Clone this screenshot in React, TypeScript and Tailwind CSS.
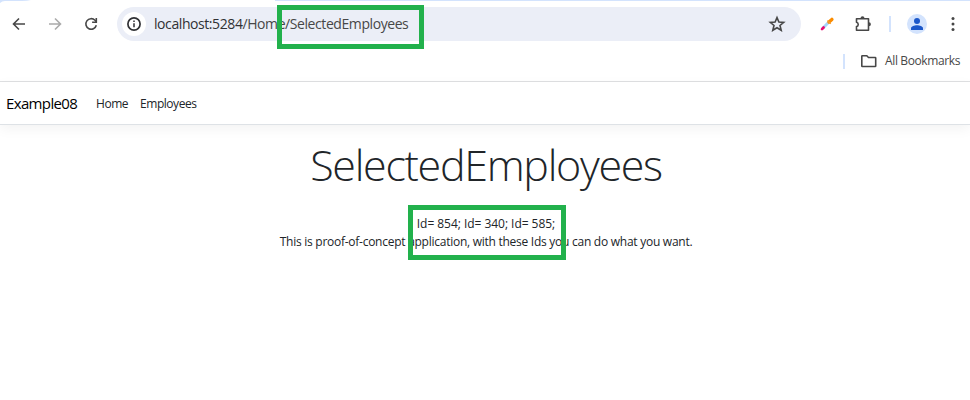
import type { ReactNode } from "react";

function Icon({ children, className }: { children: ReactNode; className: string }) {
  return (
    <svg viewBox="0 0 20 20" fill="none" className={`h-5 w-5 shrink-0 ${className}`}>
      {children}
    </svg>
  );
}

function AddressBar() {
  return (
    <div className="relative ml-[16px] flex h-[34px] w-[684px] items-center rounded-full bg-[#ebeef7] pl-[5px] pr-[14px]">
      <span className="flex h-6 w-6 items-center justify-center rounded-full bg-white">
        <Icon className="text-[#303134]">
          <circle cx="10" cy="10" r="6.1" stroke="currentColor" strokeWidth="1.7" />
          <path d="M10 9.3v4M10 6.6v1.5" stroke="currentColor" strokeWidth="1.5" />
        </Icon>
      </span>
      <span className="ml-[8px] whitespace-nowrap text-[14px] leading-5 tracking-[-0.42px] text-[#474747]">
        <span className="text-[#303134]">localhost:5284</span>/Home/SelectedEmployees
      </span>
      <Icon className="ml-auto text-[#474747]">
        <path
          d="M10 3.6l1.9 4.4 4.8.4-3.7 3.1 1.2 4.7-4.2-2.5-4.2 2.5 1.2-4.7-3.7-3.1 4.8-.4z"
          stroke="currentColor"
          strokeWidth="1.6"
        />
      </Icon>
      <div className="absolute left-[160px] top-[-2px] h-[44px] w-[147px] border-[5px] border-[#22b14c]" />
    </div>
  );
}

function Toolbar() {
  return (
    <div className="flex h-[34px] items-center pl-[9px]">
      <Icon className="text-[#474747]">
        <path d="M16 10H5M10 4.5L4.5 10l5.5 5.5" stroke="currentColor" strokeWidth="1.6" />
      </Icon>
      <Icon className="ml-[16px] text-[#ababab]">
        <path d="M4 10h11M10 4.5L15.5 10 10 15.5" stroke="currentColor" strokeWidth="1.6" />
      </Icon>
      <Icon className="ml-[16px] text-[#474747]">
        <path d="M15.3 11.3A5.3 5.3 0 1 1 14 6.3l1.4 1.5" stroke="currentColor" strokeWidth="1.6" />
        <path d="M15.3 4v4.2h-4.2" stroke="currentColor" strokeWidth="1.6" />
      </Icon>
      <AddressBar />
      <Icon className="ml-[16px]">
        <path d="M5.5 14.5l6.2-6.2" stroke="#a5d4fa" strokeWidth="3" />
        <path d="M5 15.100l1.600-1.600" stroke="#e9096f" strokeWidth="2.600" strokeLinecap="round" />
        <path d="M12 8l2.900-2.600" stroke="#fb8c00" strokeWidth="3.400" strokeLinecap="round" />
        <path d="M10.500 6.500l3.200 3.200" stroke="#f59a2c" strokeWidth="1.400" />
      </Icon>
      <Icon className="ml-[16px] text-[#474747]">
        <path
          d="M3.500 4.700h12v11.500h-12v-3.600c2.300-.5 2.300-3.800 0-4.300z"
          stroke="currentColor"
          strokeWidth="1.6"
          strokeLinejoin="round"
        />
        <path d="M7.500 4.300a2 2 0 0 1 4 0zM15.900 8.200a2 2 0 0 1 0 4z" fill="currentColor" />
      </Icon>
      <span className="ml-[16px] h-4 w-[2px] bg-[#d3e3fd]" />
      <span className="ml-[16px] flex h-5 w-5 items-center justify-center rounded-full bg-[#d3e3fd]">
        <Icon className="text-[#1b57c9]">
          <circle cx="10" cy="7" r="3" fill="currentColor" />
          <path d="M4 16v-1.7C4 12.2 7.5 11.2 10 11.2s6 1 6 3.1V16z" fill="currentColor" />
        </Icon>
      </span>
      <Icon className="ml-[16px] text-[#474747]">
        <circle cx="10" cy="4.5" r="1.5" fill="currentColor" />
        <circle cx="10" cy="10" r="1.5" fill="currentColor" />
        <circle cx="10" cy="15.5" r="1.5" fill="currentColor" />
      </Icon>
    </div>
  );
}

function BrowserChrome() {
  return (
    <header className="h-[82px] border-b border-[#dfe0e2]">
      <div className="flex h-[7px] items-start">
        <svg viewBox="0 0 31 3" className="h-[3px] w-[31px]">
          <path d="M0 0h31Q27 1 22 1H5Q2 1 0 3z" fill="#d3e3fd" />
        </svg>
        <span className="ml-[244px] h-px flex-1 bg-[#d3e3fd]" />
      </div>
      <Toolbar />
      <div className="flex h-[40px] items-center pl-[843px]">
        <span className="h-[15px] w-[2px] bg-[#d3e3fd]" />
        <Icon className="ml-[14px] text-[#474747]">
          <path
            d="M3.3 4.8h4.5l1.7 1.7h6.7q.5 0 .5.5v8q0 .5-.5.5H3.3q-.5 0-.5-.5V5.3q0-.5.5-.5z"
            stroke="currentColor"
            strokeWidth="1.6"
          />
        </Icon>
        <span className="ml-[6px] whitespace-nowrap text-[12px] leading-4 tracking-[-0.37px] text-[#474747]">
          All Bookmarks
        </span>
      </div>
    </header>
  );
}

export default function App() {
  return (
    <div className="h-[400px] w-[970px] overflow-hidden bg-white font-['Open_Sans','Noto_Sans',sans-serif]">
      <BrowserChrome />
      <nav className="flex h-[43px] items-center whitespace-nowrap border-b border-[#dee2e6] pl-[6px] pt-px text-[12px] tracking-[-0.45px] text-[#212529] shadow-[0_4px_12px_rgba(0,0,0,0.05)]">
        <span className="w-[90px] text-[15px] tracking-[-0.64px] text-black">Example08</span>
        <span className="w-[44px]">Home</span>
        <span>Employees</span>
      </nav>
      <main className="flex flex-col items-center whitespace-nowrap pl-[2px] pt-[13px] text-[#212529]">
        <h1 className="text-[43px] font-light leading-[54px] tracking-[-1.3px]">SelectedEmployees</h1>
        <div className="relative mt-[23px] flex flex-col items-center text-[12px] leading-[18px]">
          <p className="tracking-[-0.04px]">Id= 854; Id= 340; Id= 585;</p>
          <p className="tracking-[-0.26px]">
            This is proof-of-concept application, with these Ids you can do what you want.
          </p>
          <div className="absolute left-1/2 top-[-10px] ml-[-78px] h-[55px] w-[158px] border-[5px] border-[#22b14c]" />
        </div>
      </main>
    </div>
  );
}
